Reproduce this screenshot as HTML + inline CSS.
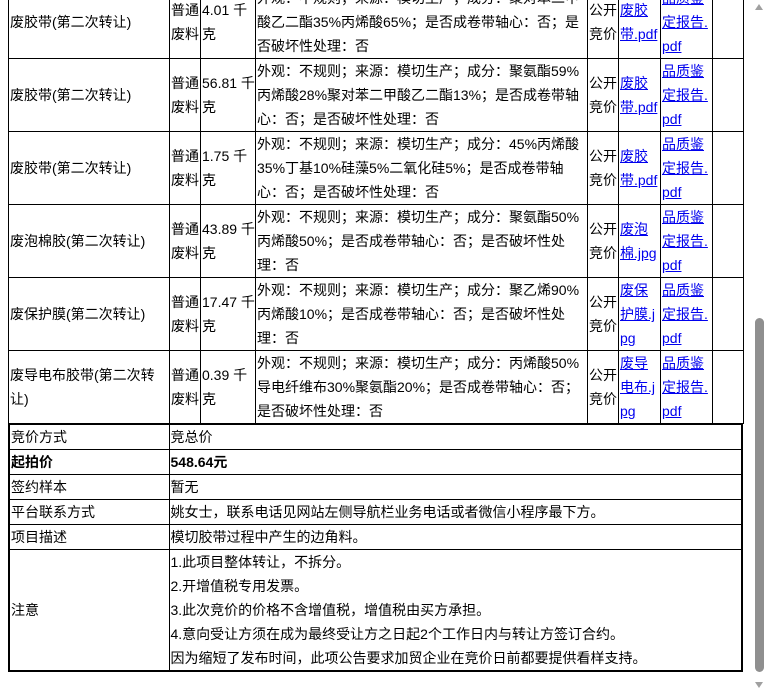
<!DOCTYPE html>
<html><head><meta charset="utf-8"><style>
html,body{margin:0;padding:0;background:#fff;overflow:hidden;width:767px;height:693px}
body{font-family:"Liberation Sans","Noto Sans CJK SC",sans-serif;font-size:14px;color:#000;position:relative}
table{border-collapse:collapse;table-layout:fixed;position:absolute;left:8px}
td{border:1px solid #000;padding:0 0 0 1px;vertical-align:middle;line-height:24px;white-space:nowrap;overflow:hidden}
#t1{top:-15px;width:735px}
#t1 tr{height:73px}
a{color:#0000ee;text-decoration:underline}
#t2{top:423px;width:735px;border:2px solid #000}
#t2 td{height:24px}
.sb{position:absolute;left:752px;top:0;width:15px;height:693px;background:#fff}
.th{position:absolute;left:755px;top:318px;width:9px;height:354px;background:#8f8f8f;border-radius:5px}
.up{position:absolute;left:755px;top:4px;width:0;height:0;border-left:4.5px solid transparent;border-right:4.5px solid transparent;border-bottom:6px solid #a0a0a0}
.dn{position:absolute;left:755px;top:682px;width:0;height:0;border-left:4.5px solid transparent;border-right:4.5px solid transparent;border-top:6px solid #a0a0a0}
</style></head><body>
<table id="t1">
<colgroup><col style="width:161px"><col style="width:31px"><col style="width:55px"><col style="width:332px"><col style="width:31px"><col style="width:42px"><col style="width:52px"><col style="width:31px"></colgroup>
<tr><td>废胶带(第二次转让)</td><td>普通<br>废料</td><td>4.01 千<br>克</td><td>外观：不规则；来源：模切生产；成分：聚对苯二甲<br>酸乙二酯35%丙烯酸65%；是否成卷带轴心：否；是<br>否破坏性处理：否</td><td>公开<br>竞价</td><td><a>废胶<br>带.pdf</a></td><td><a>品质鉴<br>定报告.<br>pdf</a></td><td></td></tr>
<tr><td>废胶带(第二次转让)</td><td>普通<br>废料</td><td>56.81 千<br>克</td><td>外观：不规则；来源：模切生产；成分：聚氨酯59%<br>丙烯酸28%聚对苯二甲酸乙二酯13%；是否成卷带轴<br>心：否；是否破坏性处理：否</td><td>公开<br>竞价</td><td><a>废胶<br>带.pdf</a></td><td><a>品质鉴<br>定报告.<br>pdf</a></td><td></td></tr>
<tr><td>废胶带(第二次转让)</td><td>普通<br>废料</td><td>1.75 千<br>克</td><td>外观：不规则；来源：模切生产；成分：45%丙烯酸<br>35%丁基10%硅藻5%二氧化硅5%；是否成卷带轴<br>心：否；是否破坏性处理：否</td><td>公开<br>竞价</td><td><a>废胶<br>带.pdf</a></td><td><a>品质鉴<br>定报告.<br>pdf</a></td><td></td></tr>
<tr><td>废泡棉胶(第二次转让)</td><td>普通<br>废料</td><td>43.89 千<br>克</td><td>外观：不规则；来源：模切生产；成分：聚氨酯50%<br>丙烯酸50%；是否成卷带轴心：否；是否破坏性处<br>理：否</td><td>公开<br>竞价</td><td><a>废泡<br>棉.jpg</a></td><td><a>品质鉴<br>定报告.<br>pdf</a></td><td></td></tr>
<tr><td>废保护膜(第二次转让)</td><td>普通<br>废料</td><td>17.47 千<br>克</td><td>外观：不规则；来源：模切生产；成分：聚乙烯90%<br>丙烯酸10%；是否成卷带轴心：否；是否破坏性处<br>理：否</td><td>公开<br>竞价</td><td><a>废保<br>护膜.j<br>pg</a></td><td><a>品质鉴<br>定报告.<br>pdf</a></td><td></td></tr>
<tr><td>废导电布胶带(第二次转<br>让)</td><td>普通<br>废料</td><td>0.39 千<br>克</td><td>外观：不规则；来源：模切生产；成分：丙烯酸50%<br>导电纤维布30%聚氨酯20%；是否成卷带轴心：否；<br>是否破坏性处理：否</td><td>公开<br>竞价</td><td><a>废导<br>电布.j<br>pg</a></td><td><a>品质鉴<br>定报告.<br>pdf</a></td><td></td></tr>
</table>
<table id="t2">
<colgroup><col style="width:160px"><col></colgroup>
<tr><td>竞价方式</td><td>竞总价</td></tr>
<tr><td><b>起拍价</b></td><td><b>548.64元</b></td></tr>
<tr><td>签约样本</td><td>暂无</td></tr>
<tr><td>平台联系方式</td><td>姚女士，联系电话见网站左侧导航栏业务电话或者微信小程序最下方。</td></tr>
<tr><td>项目描述</td><td>模切胶带过程中产生的边角料。</td></tr>
<tr><td>注意</td><td>1.此项目整体转让，不拆分。<br>2.开增值税专用发票。<br>3.此次竞价的价格不含增值税，增值税由买方承担。<br>4.意向受让方须在成为最终受让方之日起2个工作日内与转让方签订合约。<br>因为缩短了发布时间，此项公告要求加贸企业在竞价日前都要提供看样支持。</td></tr>
</table>
<div class="sb"></div><div class="th"></div><div class="up"></div><div class="dn"></div>
</body></html>
